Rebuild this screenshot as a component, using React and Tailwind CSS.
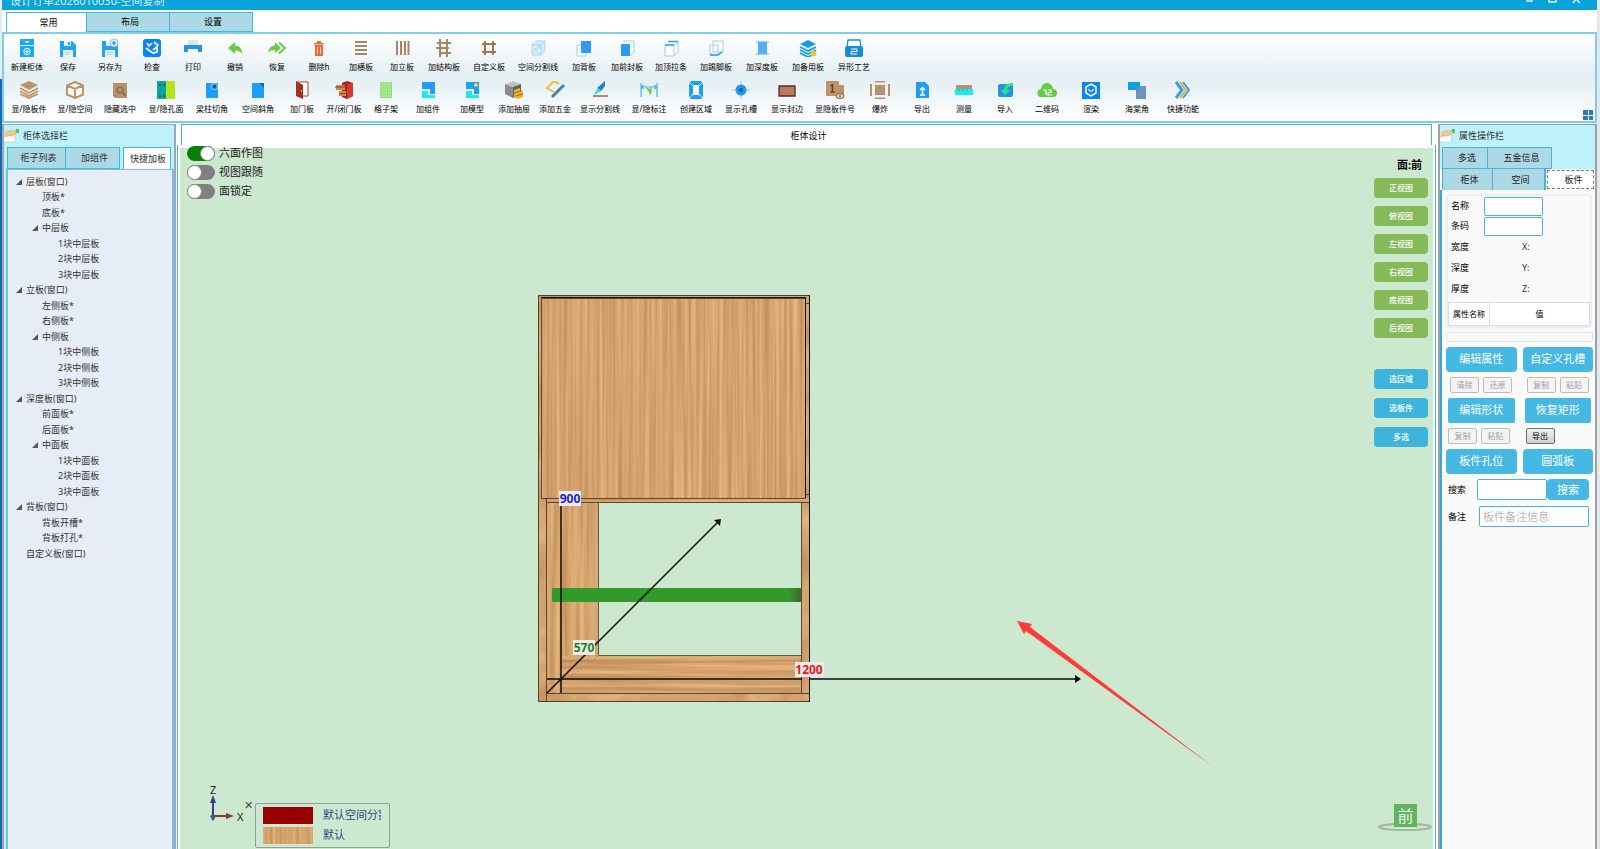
import React, { useState } from 'react';

const Svg = ({ children }) => (
  <svg viewBox="0 0 18 18" className="h-[18px] w-5" aria-hidden="true">{children}</svg>
);

const icons = {
  newCabinet: <Svg><path fill="#18aaf8" d="M2 0h14v6H2zM2 7h14v11H2z" /><path fill="#fff" d="M7 2h4v1.500H7z" /><circle cx="9" cy="12.500" r="3.200" fill="none" stroke="#fff" /><path stroke="#fff" d="M9 10.500v4M7 12.500h4" /></Svg>,
  save: <Svg><path fill="#1ea2fb" d="M1 2h12l4 4v12H1z" /><path fill="#eaf4fb" d="M5 2h7v5H5zM4 11h10v7H4z" /><path fill="#1ea2fb" d="M9 3h2v3H9z" /><path stroke="#c3c9cf" d="M6 13.500h6M6 15.500h4" /></Svg>,
  saveAs: <Svg><path fill="#1ea2fb" d="M1 2h12l4 4v12H1z" /><path fill="#eaf4fb" d="M5 2h5v5H5zM4 11h10v7H4z" /><path stroke="#c3c9cf" d="M6 13.500h6M6 15.500h4" /><circle cx="13" cy="4" r="4" fill="#d9ecfa" stroke="#54b1f2" strokeWidth=".7" /><path stroke="#1487e8" strokeWidth="1.200" d="M13 2v4M11 4h4" /></Svg>,
  check: <Svg><rect width="18" height="18" rx="3" fill="#0c82fa" /><path fill="none" stroke="#fff" strokeWidth="1.700" d="m4 4 2 3 3-3M3 9l4 3 3 2 4-1V8l-4 3M11 3l4 3-2 3" /><circle cx="13" cy="5" r="1.500" fill="#8fd4ff" /></Svg>,
  print: <Svg><path fill="#e4e4e6" d="M4 1h10v6H4z" /><path fill="#1d95f0" d="M0 6h18v7H0z" /><path fill="#fff" d="M4 10h10v6H4z" /></Svg>,
  undo: <Svg><path fill="#69cb44" d="M2 9 9 3v3.500c5 0 7 3 7 8.500-2-3-4-3.500-7-3.500V15z" /></Svg>,
  redo: <Svg><path fill="#69cb44" d="m13 9-6-6v3.500C3 6.500 1 9 0 14c2-2.500 4-3 7-3v3z" /><path fill="none" stroke="#69cb44" strokeWidth="2" d="m11 3.500 6 5.500-6 5.500" /></Svg>,
  trash: <Svg><path fill="#f4673a" d="M4 4h10v1.500H4zM7 2h4v2H7zM5 6h8v11H5z" /><path stroke="#ffd9c9" d="M7.500 8v7M10.500 8v7" /></Svg>,
  rows: <Svg><path stroke="#a98566" strokeWidth="2" d="M3 3h12M3 7h12M3 11h12M3 15h12" /></Svg>,
  cols: <Svg><path stroke="#a98566" strokeWidth="2" d="M4 2v14M8 2v14M12 2v14M15.500 2v14" /></Svg>,
  struct: <Svg><path stroke="#a98566" strokeWidth="2" d="M5 0v18M12 0v18M2 4h14M1 9h13M4 14h12" /></Svg>,
  custom: <Svg><path fill="none" stroke="#a07650" strokeWidth="2" d="M5 2v14M13 2v14M2 5h14M2 13h14" /></Svg>,
  divider: <Svg><path fill="#dbeefd" stroke="#a5d3f8" d="M3 6l4-4h9v9l-4 5H3zM3 6h9v10M12 6l4-4" /><path stroke="#a5d3f8" d="m4 14 10-10M5 9l4 5M8 4l5 7" /></Svg>,
  back: <Svg><path fill="#fff" stroke="#9acdf5" d="M2 6h9v11H2z" /><path fill="#2d9bf3" d="M6 2h10v12H6z" /></Svg>,
  front: <Svg><path fill="#fff" stroke="#9acdf5" d="M5 2h11v11l-4 4" /><path fill="#2d9bf3" d="M3 5h9v12H3z" /></Svg>,
  topBar: <Svg><path fill="#fff" stroke="#9acdf5" d="M3 6h9v11H3zM6 2.500h10V13l-4 4M12 6l4-3.500" /><path stroke="#2d9bf3" strokeWidth="1.500" d="M3 6h9M6 2.500h10" /></Svg>,
  kick: <Svg><path fill="#fff" stroke="#9acdf5" d="M6 2h10v11H6zM3 6h8v10H3zM3 16l3-3M11 16l5-3" /><path stroke="#2d9bf3" strokeWidth="1.500" d="M3 16h8l4-3" fill="none" /></Svg>,
  deep: <Svg><path fill="#a5d3f8" d="M3 2h13v2H3zM3 14h13v2H3z" /><path fill="#56aff6" d="M5 3h9v12H5z" /></Svg>,
  spare: <Svg><path fill="#1499e6" d="m9 1 8 4-8 4-8-4z" /><path fill="none" stroke="#1499e6" strokeWidth="1.800" d="m1 8 8 4 8-4M1 11l8 4 8-4M1 14l8 4 4-2" /><circle cx="14.500" cy="14.500" r="3" fill="#efc336" /></Svg>,
  craft: <Svg><path fill="none" stroke="#168ed5" strokeWidth="1.300" d="m2 8 1-7h12l1 7" /><rect x="0" y="7" width="18" height="11" rx="2" fill="#168ed5" /><path fill="none" stroke="#fff" d="M6 10h6v2.500H6V15h6" /></Svg>,

  layers: <Svg><path fill="#bd9468" d="m9 0 9 4-9 5-9-5z" /><path fill="none" stroke="#bd9468" strokeWidth="1.700" d="m0 7 9 5 9-5M0 10l9 5 9-5M0 13l9 4 9-4" /></Svg>,
  cube: <Svg><path fill="#fff" stroke="#bd9468" strokeWidth="2" d="m9 1 8 3.500v9L9 17l-8-3.500v-9zM1 4.500 9 8l8-3.500M9 8v9" /></Svg>,
  hide: <Svg><path fill="#b8906a" d="M2 2h14v15H4l-2-2z" /><circle cx="9" cy="9" r="3" fill="none" stroke="#876343" strokeWidth="1.200" /><path stroke="#876343" strokeWidth="1.500" d="m12 12 3 3" /></Svg>,
  holes: <Svg><path fill="#0fa3a0" d="M0 0h9v18H0z" /><path fill="#b1e51c" d="M9 0h9v18H9z" /><path stroke="#075" strokeWidth="2" strokeDasharray="2 9" d="M3 3v15M7 3v15" /></Svg>,
  notch: <Svg><path fill="#1b9efc" d="M3 2h12v15H3z" /><path fill="#0b5fa5" d="M9 3h5v5H9z" stroke="#fff" strokeWidth=".6" /></Svg>,
  bevel: <Svg><path fill="#1b9efc" d="M3 2h7l5 6v9H3z" /><path fill="#0b6ec0" d="M10 2h5v6z" /></Svg>,
  door: <Svg><path fill="#fff" stroke="#b5402f" d="M4 1h11v14H4z" /><path fill="#a62d21" d="m3 0 7 4v14l-7-3z" /><circle cx="8.500" cy="10" r=".7" fill="#fff" /></Svg>,
  openDoor: <Svg><path fill="#a8241b" d="m7 2 5-2 6 2v13l-6 3-5-2z" /><path fill="#d3392c" d="m12 3 6-1v13l-6 3z" /><path fill="#c98a55" d="M1 4h9v5H1zM4 10h7v5H4z" /><path stroke="#7d4a22" d="M0 6h10M4 12.500h7" /></Svg>,
  lattice: <Svg><path fill="#8fe079" d="M3 1h12v16H3z" /><path stroke="#d2f5c8" strokeWidth=".8" strokeDasharray="1 1" d="M3 3h12M3 6h12M3 9h12M3 12h12M3 15h12M6 1v16M9 1v16M12 1v16" /></Svg>,
  group: <Svg><path fill="#1b9efc" d="M3 1h13v12h-5V8H3z" /><path fill="#19e9f7" d="M3 10h6v4h7v3H3z" /></Svg>,
  model: <Svg><path fill="#1b9efc" d="M3 1h13v12h-5V8H3z" /><path fill="#19e9f7" d="M3 10h6v4h7v3H3z" /><circle cx="13" cy="4" r="2" fill="#f5dc3a" /></Svg>,
  drawer: <Svg><path fill="#c2c2c4" d="m0 3 8-3 8 3-8 3z" /><path fill="#8c8c8f" d="M0 3l8 3v11l-8-4z" /><path fill="#5f5f63" d="m8 6 8-3v10l-8 4z" /><path fill="#f2b322" d="m9 9 6-2v3l3 1v5l-5 2-4-2z" /><path stroke="#a86b08" d="m9 12 8-2M10 15l8-2" /></Svg>,
  hardware: <Svg><path fill="none" stroke="#f3bd31" strokeWidth="2" d="M8 11 1 7l7-7 5 3" /><path stroke="#4283ac" strokeWidth="3" d="m6 16 12-12" /></Svg>,
  knife: <Svg><path fill="#1be1ed" d="m3 14 3-6 4 2z" /><path fill="#2084c7" d="m6 7 8-7v5l-4 5z" /><path stroke="#b08a6c" strokeWidth="2" d="M2 15h15" /></Svg>,
  mark: <Svg><path fill="none" stroke="#49b5ec" strokeWidth="1.200" d="M1 2v14M17 2v14M1 6h16M4 4 1 6l3 2M14 4l3 2-3 2" /><path fill="#6bd049" d="m5 6 5 2 1-3 1 5-2 5-1-4z" /></Svg>,
  region: <Svg><path fill="#1b9efc" d="M2 3l2-3h10l2 3v12l-2 3H4l-2-3z" /><path fill="#fff" d="M6 4h6v10H6z" /><path stroke="#d4edff" d="m3 2 3 3M15 2l-3 3M3 16l3-3M15 16l-3-3" /></Svg>,
  target: <Svg><path stroke="#8be3ee" strokeWidth="1.300" d="M9 0v18M0 9h18" /><circle cx="9" cy="9" r="5.500" fill="#2196ee" /><circle cx="9" cy="9" r="2" fill="#075c9f" /></Svg>,
  edge: <Svg><path fill="#ba7b5c" stroke="#4e2f22" strokeWidth="1.300" d="M1 5h16v10H1z" /></Svg>,
  number: <Svg><path fill="#bd9468" d="M0 0h13v15H0zM13 4h5v10h-5z" /><path stroke="#5c4128" strokeWidth="1.500" fill="none" d="m4.500 5 2-1v7M4.500 11h4" /><ellipse cx="14" cy="15" rx="4" ry="2.500" fill="#e6d2ba" stroke="#7e5d3d" /><circle cx="14" cy="15" r="1" fill="#7e5d3d" /></Svg>,
  explode: <Svg><path fill="#b8906a" d="M4 4h10v10H4z" /><path stroke="#b8906a" strokeWidth="2" d="M4 .5h10M4 17.500h10M0 3v12M18 3v12" /></Svg>,
  exportFile: <Svg><path fill="#1f9cf7" d="M3 1h9l4 4v12H3z" /><path fill="none" stroke="#fff" strokeWidth="1.500" d="M9.500 13V7M7 9l2.500-2.500L12 9M7 14h5" /></Svg>,
  measure: <Svg><path fill="#b8906a" d="M1 4h16v5H1z" /><path fill="#18ecf8" d="M0 8h18v6H0z" /><path stroke="#11aac2" d="M4 8v2M8 8v2M12 8v2" /></Svg>,
  importFile: <Svg><rect x="2" y="3" width="15" height="13" rx="2" fill="#2b8fe4" /><path fill="#2be678" d="M17 2v3c-4 0-6 1-6 4h3l-5 5-4-5h3c0-5 4-7 9-7z" /></Svg>,
  cloud: <Svg><path fill="#66cc46" d="M4 16a4 4 0 0 1-1-8 6 6 0 0 1 12 0 4 4 0 0 1 0 8z" /><path fill="none" stroke="#fff" strokeWidth="1.200" d="M5 9h3v5M10 9h3v2.500h-3V14h4" /></Svg>,
  render: <Svg><path fill="#0a84fb" d="M0 1h18v17H0z" /><path fill="none" stroke="#fff" strokeWidth="1.500" d="m9 3 5 3v6l-5 3-5-3V6z" /><path fill="none" stroke="#fff" strokeWidth="1.200" d="M6.500 8c1 3 4 3 5 0" /></Svg>,
  corner: <Svg><path fill="#0aa0e8" d="M0 1h12v8H0z" /><path fill="#6d92c4" d="M8 5h10v13H8z" /><path fill="#0aa0e8" d="M0 1h12v4L8 9H0z" /></Svg>,
  quick: <Svg><path fill="none" stroke="#2ba3ea" strokeWidth="3" d="m2 1 6 8-6 8" /><path fill="none" stroke="#f0a92b" strokeWidth="2" d="m6 1 6 8-6 8" /><path fill="none" stroke="#2ba3ea" strokeWidth="2" d="m9 1 6 8-6 8" /></Svg>,
};

// [icon, label, slot width]
const toolRows = [
  [
    ['newCabinet', '新建柜体', 'w-[42px]'],
    ['save', '保存', 'w-10'],
    ['saveAs', '另存为', 'w-11'],
    ['check', '检查', 'w-10'],
    ['print', '打印', 'w-[42px]'],
    ['undo', '撤销', 'w-[42px]'],
    ['redo', '恢复', 'w-[42px]'],
    ['trash', '删除h', 'w-[42px]'],
    ['rows', '加横板', 'w-[42px]'],
    ['cols', '加立板', 'w-10'],
    ['struct', '加结构板', 'w-11'],
    ['custom', '自定义板', 'w-[46px]'],
    ['divider', '空间分割线', 'w-[52px]'],
    ['back', '加背板', 'w-10'],
    ['front', '加前封板', 'w-[46px]'],
    ['topBar', '加顶拉条', 'w-[42px]'],
    ['kick', '加踢脚板', 'w-12'],
    ['deep', '加深度板', 'w-11'],
    ['spare', '加备用板', 'w-12'],
    ['craft', '异形工艺', 'w-11'],
  ],
  [
    ['layers', '显/隐板件', 'w-[46px]'],
    ['cube', '显/隐空间', 'w-[46px]'],
    ['hide', '隐藏选中', 'w-11'],
    ['holes', '显/隐孔面', 'w-12'],
    ['notch', '梁柱切角', 'w-11'],
    ['bevel', '空间斜角', 'w-12'],
    ['door', '加门板', 'w-10'],
    ['openDoor', '开/闭门板', 'w-11'],
    ['lattice', '格子架', 'w-10'],
    ['group', '加组件', 'w-11'],
    ['model', '加模型', 'w-11'],
    ['drawer', '添加抽屉', 'w-10'],
    ['hardware', '添加五金', 'w-[42px]'],
    ['knife', '显示分割线', 'w-12'],
    ['mark', '显/隐标注', 'w-[50px]'],
    ['region', '创建区域', 'w-11'],
    ['target', '显示孔槽', 'w-[46px]'],
    ['edge', '显示封边', 'w-[46px]'],
    ['number', '显隐板件号', 'w-[50px]'],
    ['explode', '爆炸', 'w-10'],
    ['exportFile', '导出', 'w-11'],
    ['measure', '测量', 'w-10'],
    ['importFile', '导入', 'w-[42px]'],
    ['cloud', '二维码', 'w-[42px]'],
    ['render', '渲染', 'w-[46px]'],
    ['corner', '海棠角', 'w-[46px]'],
    ['quick', '快捷功能', 'w-[46px]'],
  ],
];

// [level, label, has children]
const tree = [
  [1, '层板(窗口)', true],
  [2, '顶板*'],
  [2, '底板*'],
  [2, '中层板', true],
  [3, '1块中层板'],
  [3, '2块中层板'],
  [3, '3块中层板'],
  [1, '立板(窗口)', true],
  [2, '左侧板*'],
  [2, '右侧板*'],
  [2, '中侧板', true],
  [3, '1块中侧板'],
  [3, '2块中侧板'],
  [3, '3块中侧板'],
  [1, '深度板(窗口)', true],
  [2, '前面板*'],
  [2, '后面板*'],
  [2, '中面板', true],
  [3, '1块中面板'],
  [3, '2块中面板'],
  [3, '3块中面板'],
  [1, '背板(窗口)', true],
  [2, '背板开槽*'],
  [2, '背板打孔*'],
  [1, '自定义板(窗口)'],
];

const indent = { 1: 'pl-2', 2: 'pl-6', 3: 'pl-10' };

const PanelTitle = ({ children }) => (
  <div className="flex h-[22px] shrink-0 items-center gap-[3px] bg-[#bdf2fc] text-[9px] text-[#333]">
    <svg viewBox="0 0 16 14" className="h-3.5 w-4" aria-hidden="true">
      <path fill="#fff" stroke="#c9b9b0" strokeWidth=".5" d="M0 4h11v9H0z" />
      <path fill="#eec888" stroke="#c99c58" strokeWidth=".4" d="M1 5c2-3 4-4 7-3l4-1v4L8 7H4L1 8z" />
      <path fill="#5cc060" d="M12 0h3v4h-3z" />
    </svg>
    {children}
  </div>
);

const Tools = () => (
  <div className="relative flex flex-col gap-1.5 border-2 border-[#7fcdea] bg-linear-to-b from-white via-[#e3eef3] to-white pt-[5px] pb-1 pl-0.5">
    {toolRows.map((row, i) => (
      <div key={i} className="flex">
        {row.map(([icon, label, width]) => (
          <button key={label} className={`flex shrink-0 flex-col items-center gap-0.5 ${width}`}>
            {icons[icon]}
            <span className="text-[8px] leading-4 whitespace-nowrap text-black">{label}</span>
          </button>
        ))}
      </div>
    ))}
    <button className="absolute right-0.5 bottom-px grid size-2.5 grid-cols-2 gap-px" aria-label="布局">
      <span className="size-full bg-[#2a7ab8]" />
      <span className="size-full bg-[#2a7ab8]" />
      <span className="size-full bg-[#2a7ab8]" />
      <span className="size-full bg-[#2a7ab8]" />
    </button>
  </div>
);

const LeftPanel = () => (
  <aside className="flex w-[174px] shrink-0 flex-col border-x-2 border-t border-[#a5a5b0] bg-[#bdf2fc]">
    <PanelTitle>柜体选择栏</PanelTitle>
    <div className="flex h-[22px] shrink-0 pl-[3px] text-[9px] text-[#333]">
      <button className="w-[59px] border border-[#3fb5e5] bg-[#add8e6] pl-1">柜子列表</button>
      <button className="mr-[3px] w-[54px] border border-l-0 border-[#3fb5e5] bg-[#add8e6] pl-1">加组件</button>
      <button className="w-12 border border-b-0 border-[#3fb5e5] bg-white pl-0.5 whitespace-nowrap">快捷加板</button>
    </div>
    <ul className="ml-0.5 min-h-0 flex-1 overflow-hidden border-x-2 border-t border-[#6cc6ec] bg-[#e6edf6] pt-1 text-[9px] text-[#333]">
      {tree.map(([level, label, open], i) => (
        <li key={i} className={`flex items-center odd:h-[15px] even:h-4 ${indent[level]}`}>
          <span className="w-2.5">
            {open && (
              <svg viewBox="0 0 6 6" className="size-1.5" aria-hidden="true">
                <path fill="#555" d="M6 0v6H0z" />
              </svg>
            )}
          </span>
          <span className={i === 0 ? 'bg-[#f2f2f2] leading-[14px]' : 'leading-[14px]'}>{label}</span>
        </li>
      ))}
    </ul>
  </aside>
);

// brushed grain: stretched noise mapped onto a light oak ramp
const Wood = ({ id, freq, seed }) => (
  <filter id={id} x="0" y="0" width="1" height="1" colorInterpolationFilters="sRGB">
    <feTurbulence type="fractalNoise" baseFrequency={freq} numOctaves="3" seed={seed} />
    <feColorMatrix values="0.22 0 0 0 0.72  0.26 0 0 0 0.51  0.26 0 0 0 0.3  0 0 0 0 1" />
  </filter>
);

const Drawing = () => (
  <svg className="absolute inset-0 size-full" aria-hidden="true">
    <defs>
      <Wood id="grain-door" freq="0.3 0.004" seed="4" />
      <Wood id="grain-v" freq="0.2 0.006" seed="9" />
      <Wood id="grain-h" freq="0.006 0.25" seed="2" />
      <Wood id="grain-edge" freq="0.03 0.03" seed="7" />
      <linearGradient id="shelf-end">
        <stop offset="0.95" stopColor="#32992b" />
        <stop offset="1" stopColor="#386b2c" />
      </linearGradient>
    </defs>
    <g>
      <rect x="358" y="147" width="9" height="407" filter="url(#grain-edge)" />
      <rect x="358" y="147" width="271" height="4" filter="url(#grain-h)" />
      <rect x="621" y="147" width="8" height="400" filter="url(#grain-edge)" />
      <rect x="367" y="354" width="51" height="192" filter="url(#grain-v)" />
      <rect x="380" y="508" width="241" height="38" filter="url(#grain-h)" />
      <rect x="367" y="545" width="262" height="9" filter="url(#grain-edge)" />
      <rect x="367" y="350" width="262" height="5" filter="url(#grain-h)" />
      <rect x="361" y="150" width="265" height="201" filter="url(#grain-door)" />
    </g>
    <g fill="none" stroke="#5a4630" strokeWidth="1">
      <path stroke="#4a4330" d="M358.500 147.500H629.500V553.500H358.500z" />
      <path d="M361.500 150.500H625.500V350.500H361.500z" />
      <path d="M366.500 350v203M366.500 354.500H629M621.500 354.500v191M366.500 545.500H629M625 155.500h4M625 346.500h4" />
      <path stroke="#5b5a40" d="M418.500 354.500v153H621" />
      <path stroke="#b68552" strokeDasharray="2 2" d="m418 508-28 21" />
    </g>
    <path stroke="#111" strokeWidth="1" d="M629.500 147v407M625.500 150v200M361 149.500h265" />
    <rect x="372" y="440" width="249" height="14" rx="1" fill="url(#shelf-end)" />
    <g stroke="#0b0b0b" strokeWidth="1.500">
      <path d="M381 352v193M367 531h530M367 545 538 374" />
      <path fill="#0b0b0b" stroke="none" d="M895 527l6 4-6 4zM541 371l-1 7-6-6z" />
    </g>
    <rect x="622" y="520" width="7" height="20" filter="url(#grain-edge)" />
    <g fill="#ececec">
      <rect x="379" y="343" width="22" height="15" />
      <rect x="393" y="492" width="22" height="15" />
      <rect x="615" y="514" width="29" height="15" />
    </g>
    <g className="font-['Noto_Sans'] text-[12px] font-bold" textAnchor="middle">
      <text x="390" y="355" fill="#1f1fe0">900</text>
      <text x="404" y="504" fill="#1b851b">570</text>
      <text x="629" y="526" fill="#f01414">1200</text>
    </g>
    <path fill="#ff3a38" d="m837 473 15 3-2 3L1032 618 846 483l-2 3z" />
  </svg>
);

const viewButtons = ['正视图', '俯视图', '左视图', '右视图', '底视图', '后视图'];
const pickButtons = ['选区域', '选板件', '多选'];

const Switch = ({ label, initial }) => {
  const [on, setOn] = useState(initial);
  return (
    <label className="flex h-[19px] items-center gap-1 text-[11px] text-[#222]">
      <input
        type="checkbox"
        checked={on}
        onChange={(e) => setOn(e.target.checked)}
        className="h-[15px] w-7 appearance-none rounded-full bg-[#808080] before:block before:size-[15px] before:rounded-full before:border before:border-[#8a8a8a] before:bg-white checked:bg-[#068006] checked:before:ml-[13px]"
      />
      {label}
    </label>
  );
};

const Legend = () => (
  <div className="absolute bottom-px left-[75px] flex w-[135px] flex-col gap-[3px] rounded-xs border border-[#8d9f9a] px-[7px] py-[3px] text-[11px] text-[#2b4a86]">
    <div className="flex h-[17px] items-center gap-2.5">
      <svg className="h-[17px] w-[50px] shrink-0" aria-hidden="true">
        <rect width="50" height="17" fill="#990202" />
        <path stroke="#850000" fill="none" d="M2 5l9-1 8 3 12-3 16 2M4 12l14-2 9 3 20-3" />
      </svg>
      <span className="w-[58px] overflow-hidden whitespace-nowrap">默认空间分割</span>
    </div>
    <div className="flex h-[17px] items-center gap-2.5">
      <svg className="h-[17px] w-[50px] shrink-0" aria-hidden="true">
        <rect width="50" height="17" filter="url(#grain-door)" />
      </svg>
      <span>默认</span>
    </div>
  </div>
);

const AxisGizmo = () => (
  <svg className="absolute bottom-5 left-6 h-12 w-12 text-[11px]" viewBox="0 0 48 48" aria-hidden="true">
    <path stroke="#3d3d8f" strokeWidth="2" d="M9 36V20" />
    <path fill="#3d3d8f" d="m9 14 3 8H6zM9 40l-3-5h6z" />
    <path stroke="#843c3c" strokeWidth="2" d="M10 35h13" />
    <path fill="#843c3c" d="m30 35-8 3v-6z" />
    <path stroke="#2f8a2f" strokeWidth="1.500" d="m7 34 3 3" />
    <g fill="#222" className="font-['Noto_Sans'] text-[11px]">
      <text x="6" y="13">Z</text>
      <text x="33" y="40">X</text>
    </g>
  </svg>
);

const Canvas = () => (
  <main className="mx-px flex min-w-0 flex-1 flex-col pr-px">
    <h1 className="mx-1 h-[21px] shrink-0 border-x border-t border-[#45b4dd] bg-white pl-1 text-center text-[9px] leading-[22px] text-black">
      柜体设计
    </h1>
    <div className="flex min-h-0 flex-1 flex-col border-x border-[#45b4dd] bg-white px-0.5 pt-[3px]">
      <div className="relative flex min-h-0 flex-1 justify-between bg-[#cce8cf]">
        <Drawing />
        <div className="relative -mt-1 ml-[7px] self-start">
          <Switch label="六面作图" initial={true} />
          <Switch label="视图跟随" initial={false} />
          <Switch label="面锁定" initial={false} />
        </div>
        <div className="relative mr-[5px] flex flex-col items-end pt-[9px]">
          <p className="mr-1.5 text-[11px] leading-4 font-bold text-black">面:前</p>
          <div className="mt-[5px] flex flex-col gap-2">
            {viewButtons.map((label) => (
              <button key={label} className="h-5 w-[54px] rounded bg-[#86ba58] text-[8px] font-medium text-white">{label}</button>
            ))}
          </div>
          <div className="mt-[31px] flex flex-col gap-[9px]">
            {pickButtons.map((label) => (
              <button key={label} className="h-5 w-[54px] rounded bg-[#3cb4dc] text-[8px] font-medium text-white">{label}</button>
            ))}
          </div>
        </div>
        <AxisGizmo />
        <button className="absolute bottom-[38px] left-16 text-[11px] leading-3 text-[#444]" aria-label="关闭">✕</button>
        <Legend />
        <svg className="absolute right-0 bottom-[15px] h-8 w-14" viewBox="0 0 56 32" aria-hidden="true">
          <ellipse cx="28" cy="25" rx="26" ry="3" fill="none" stroke="#a3b5a5" strokeWidth="2" />
          <rect x="17" y="2" width="23" height="23" fill="#62b463" />
          <text x="28.500" y="20" textAnchor="middle" fill="#e8f6e8" className="text-[16px]">前</text>
        </svg>
      </div>
    </div>
  </main>
);

const BigButton = ({ children, square }) => (
  <button className={`h-[25px] bg-[#46b8e4] text-[11px] text-white ${square ? 'mx-0.5 rounded-xs' : 'rounded'}`}>{children}</button>
);

const SmallButton = ({ children, active }) => (
  <button
    disabled={!active}
    className={
      active
        ? 'h-4 w-[29px] rounded-xs border border-[#707070] bg-linear-to-b from-[#f2f2f2] to-[#cfcfcf] text-[8px] leading-3 text-black'
        : 'h-4 w-[29px] rounded-xs border border-[#bcbcbc] bg-[#f4f4f4] text-[8px] leading-3 text-[#a0a0a0]'
    }
  >
    {children}
  </button>
);

const RightPanel = () => (
  <aside className="flex w-[159px] shrink-0 flex-col border-x-2 border-t border-[#a0a0a8] bg-[#bdf2fc]">
    <PanelTitle>属性操作栏</PanelTitle>
    <div className="flex h-[22px] shrink-0 pl-0.5 text-[9px] text-[#222]">
      <button className="w-[46px] border border-[#45b4dd] bg-[#add8e6] pl-1">多选</button>
      <button className="w-16 border border-l-0 border-[#45b4dd] bg-[#add8e6] pl-1">五金信息</button>
    </div>
    <div className="flex h-[21px] shrink-0 bg-white pl-0.5 text-[9px] text-[#222]">
      <button className="w-[51px] border-x border-[#45b4dd] bg-[#add8e6] pl-1">柜体</button>
      <button className="w-[53px] border-r-2 border-[#45b4dd] bg-[#add8e6] pl-1">空间</button>
      <button className="m-px flex-1 border border-dashed border-[#777] bg-white pl-1.5">板件</button>
    </div>
    <div className="flex-1 border-l-2 border-[#35a9dc] bg-[#f9f9f9] pt-1 pr-0.5 pl-1 text-[9px] text-black">
      <div className="mr-px rounded border-2 border-[#eceef0]">
        <div className="flex h-5 items-center pl-[3px]">
          <label htmlFor="name" className="w-[33px]">名称</label>
          <input id="name" className="h-[19px] w-[59px] rounded-xs border border-[#45b4e4] bg-white px-1" />
        </div>
        <div className="flex h-5 items-center pl-[3px]">
          <label htmlFor="code" className="w-[33px]">条码</label>
          <input id="code" className="h-[19px] w-[59px] rounded-xs border border-[#45b4e4] bg-white px-1" />
        </div>
        {[['宽度', 'X:'], ['深度', 'Y:'], ['厚度', 'Z:']].map(([label, axis]) => (
          <div key={label} className="flex h-[21px] items-center pl-[3px]">
            <span className="w-[71px]">{label}</span>
            <span className="text-[#333]">{axis}</span>
          </div>
        ))}
        <table className="mt-[3px] w-full border-collapse border border-[#dcdcdc] bg-white text-[8px]">
          <thead>
            <tr className="h-[23px]">
              <th className="w-[41px] border border-[#dcdcdc] font-normal whitespace-nowrap">属性名称</th>
              <th className="border border-[#dcdcdc] font-normal">值</th>
            </tr>
          </thead>
        </table>
      </div>
      <div className="mt-1 h-2.5 rounded-xs border border-[#dde6ea]" />
      <div className="mt-[5px] flex flex-col gap-[5px]">
        <div className="grid grid-cols-2 gap-1.5">
          <BigButton>编辑属性</BigButton>
          <BigButton>自定义孔槽</BigButton>
        </div>
        <div className="grid grid-cols-2 gap-1.5 pl-1">
          <div className="flex gap-1"><SmallButton>清除</SmallButton><SmallButton>还原</SmallButton></div>
          <div className="flex gap-1 pl-0.5"><SmallButton>复制</SmallButton><SmallButton>粘贴</SmallButton></div>
        </div>
        <div className="grid grid-cols-2 gap-1.5">
          <BigButton square>编辑形状</BigButton>
          <BigButton square>恢复矩形</BigButton>
        </div>
        <div className="grid grid-cols-2 gap-1.5 pl-0.5">
          <div className="flex gap-1"><SmallButton>复制</SmallButton><SmallButton>粘贴</SmallButton></div>
          <div className="flex pl-0.5"><SmallButton active>导出</SmallButton></div>
        </div>
        <div className="grid grid-cols-2 gap-1.5">
          <BigButton>板件孔位</BigButton>
          <BigButton>圆弧板</BigButton>
        </div>
        <div className="flex items-center pr-1 pl-0.5">
          <label htmlFor="search" className="w-[29px] shrink-0">搜索</label>
          <input id="search" className="h-[21px] min-w-0 flex-1 rounded-xs border border-[#45b4e4] bg-white px-1" />
          <button className="h-[21px] w-[42px] rounded bg-[#46b8e4] text-[11px] leading-4 text-white">搜索</button>
        </div>
        <div className="flex items-center pt-px pr-1 pl-0.5">
          <label htmlFor="note" className="w-[31px] shrink-0">备注</label>
          <input id="note" placeholder="板件备注信息" className="h-[21px] min-w-0 flex-1 rounded-xs border border-[#45b4e4] bg-white px-[3px] text-[11px] placeholder:text-[#b8b8b8]" />
        </div>
      </div>
    </div>
  </aside>
);

const App = () => {
  return (
    <div className="flex h-screen overflow-hidden bg-white font-['Noto_Sans','Noto_Sans_CJK_SC',sans-serif]">
      <div className="w-0.5 shrink-0 bg-[linear-gradient(#dfeef2_79px,#1c6aae_79px)]" />
      <div className="flex min-w-0 flex-1 flex-col">
        <header className="flex h-2.5 shrink-0 items-end justify-between overflow-hidden bg-[#09a3dc] pr-3.5 pl-2">
          <span className="text-[11px] leading-[18px] text-[#d6f1fb]">设计订单2026010030-空间复制</span>
          <svg viewBox="0 0 60 10" className="h-2.5 w-[60px]" fill="none" stroke="#d6f1fb" strokeWidth="1.500" aria-hidden="true">
            <path d="M3 1h7M26-4v6h7v-6M50 3l6-7M57 3l-7-7" />
          </svg>
        </header>
        <nav className="flex h-[22px] shrink-0 pt-0.5 pl-1 text-[9px] text-black">
          <button className="w-[81px] border border-b-0 border-[#45b4dd] bg-white pl-1">常用</button>
          <button className="w-[83px] border border-l-0 border-[#45b4dd] bg-[#add8e6] pl-1">布局</button>
          <button className="w-[83px] border border-l-0 border-[#45b4dd] bg-[#add8e6] pl-1">设置</button>
        </nav>
        <Tools />
        <div className="flex min-h-0 flex-1 pt-px">
          <LeftPanel />
          <Canvas />
          <RightPanel />
        </div>
      </div>
      <div className="w-[3px] shrink-0 bg-[#e4e8ea]" />
    </div>
  );
};

export default App;
